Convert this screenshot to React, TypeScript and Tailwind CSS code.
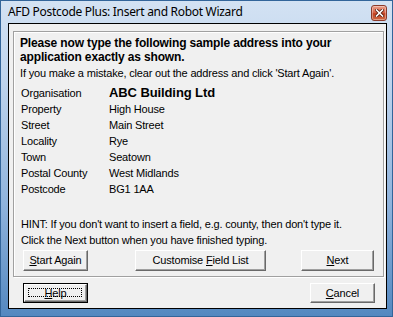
import React from "react";

const body = { fontFamily: '"Liberation Sans", Arial, sans-serif' } as const;

function Btn({
  children,
  className = "",
  focused = false,
}: {
  children: React.ReactNode;
  className?: string;
  focused?: boolean;
}) {
  return (
    <div
      className={
        "relative flex items-center justify-center bg-[#f0f0f0] border border-t-white border-l-white border-b-[#696969] border-r-[#696969] shadow-[inset_-1px_-1px_0_#a0a0a0] text-[11px] tracking-[-0.15px] text-black " +
        className
      }
    >
      {focused && (
        <div className="absolute left-[3px] top-[3px] right-[4px] bottom-[4px] border border-dotted border-black" />
      )}
      <span className="leading-none">{children}</span>
    </div>
  );
}

const rows: [string, string, boolean?][] = [
  ["Organisation", "ABC Building Ltd", true],
  ["Property", "High House"],
  ["Street", "Main Street"],
  ["Locality", "Rye"],
  ["Town", "Seatown"],
  ["Postal County", "West Midlands"],
  ["Postcode", "BG1 1AA"],
];

export default function App() {
  return (
    <div
      className="w-[393px] h-[317px] flex flex-col pl-[7px] pr-[5px] pb-[7px] border border-[#33659a] bg-[linear-gradient(to_bottom,#d3e2f3_0%,#bfd4ed_25%,#8fb3dc_65%,#5488c0_100%)] relative"
      style={body}
    >
      {/* title bar */}
      <div className="h-[22px] flex items-center">
        <span
          className="text-[12px] text-black tracking-[-0.3px]"
          style={{ fontFamily: '"Noto Sans", "Open Sans", sans-serif' }}
        >
          AFD Postcode Plus: Insert and Robot Wizard
        </span>
      </div>
      <div className="absolute left-[370px] top-[4px] w-[16px] h-[16px] rounded-[3px] border border-[#8b3a2a] bg-[linear-gradient(to_bottom,#eaa08c_0%,#d9664a_45%,#c2401f_55%,#cf6a45_100%)] flex items-center justify-center shadow-[inset_0_0_0_1px_rgba(255,255,255,0.35)]">
        <svg width="9" height="8" viewBox="0 0 9 8">
          <path
            d="M1.5 1 L7.5 7 M7.5 1 L1.5 7"
            stroke="#5a1d10"
            strokeWidth="3.2"
            strokeLinecap="square"
          />
          <path
            d="M1.5 1 L7.5 7 M7.5 1 L1.5 7"
            stroke="#ffffff"
            strokeWidth="1.6"
            strokeLinecap="square"
          />
        </svg>
      </div>

      {/* client area */}
      <div className="flex-1 border border-black bg-[#f0f0f0] flex flex-col pl-[4px] pr-[2px] pt-[7px]">
        {/* group box */}
        <div className="h-[246px] border border-[#a0a0a0] shadow-[inset_1px_1px_0_#ffffff,1px_1px_0_#ffffff] flex flex-col pl-[6px] pt-[4px] text-black">
          <div className="text-[12px] font-bold leading-[14px] tracking-[-0.15px]">
            <div>Please now type the following sample address into your</div>
            <div>application exactly as shown.</div>
          </div>
          <div className="text-[11px] leading-[16px] tracking-[-0.17px] mt-[1px]">
            If you make a mistake, clear out the address and click 'Start Again'.
          </div>
          <div className="flex flex-col mt-[4px] pl-[1px]">
            {rows.map(([k, v, b]) => (
              <div key={k} className="flex h-[16px] items-center">
                <div className="w-[88px] text-[11px] leading-[16px] tracking-[-0.17px]">
                  {k}
                </div>
                <div
                  className={
                    b
                      ? "text-[13px] font-bold leading-[16px] tracking-[-0.1px]"
                      : "text-[11px] leading-[16px] tracking-[-0.17px]"
                  }
                >
                  {v}
                </div>
              </div>
            ))}
          </div>
          <div className="flex flex-col mt-[19px] pl-[1px] text-[11px] leading-[16px] tracking-[-0.17px]">
            <div>HINT: If you don't want to insert a field, e.g. county, then don't type it.</div>
            <div>Click the Next button when you have finished typing.</div>
          </div>
          <div className="flex items-center mt-[2px] pl-[3px]">
            <Btn className="w-[65px] h-[21px]">
              <u>S</u>tart Again
            </Btn>
            <Btn className="w-[131px] h-[21px] ml-[47px]">
              Customise <u>F</u>ield List
            </Btn>
            <Btn className="w-[73px] h-[21px] ml-[35px]">
              <u>N</u>ext
            </Btn>
          </div>
        </div>
        <div className="flex items-center mt-[6px] pl-[10px]">
          <div className="w-[65px] h-[20px] border border-black flex">
            <Btn className="flex-1" focused>
              <u>H</u>elp
            </Btn>
          </div>
          <Btn className="w-[65px] h-[20px] ml-[222px]">
            <u>C</u>ancel
          </Btn>
        </div>
      </div>
    </div>
  );
}
